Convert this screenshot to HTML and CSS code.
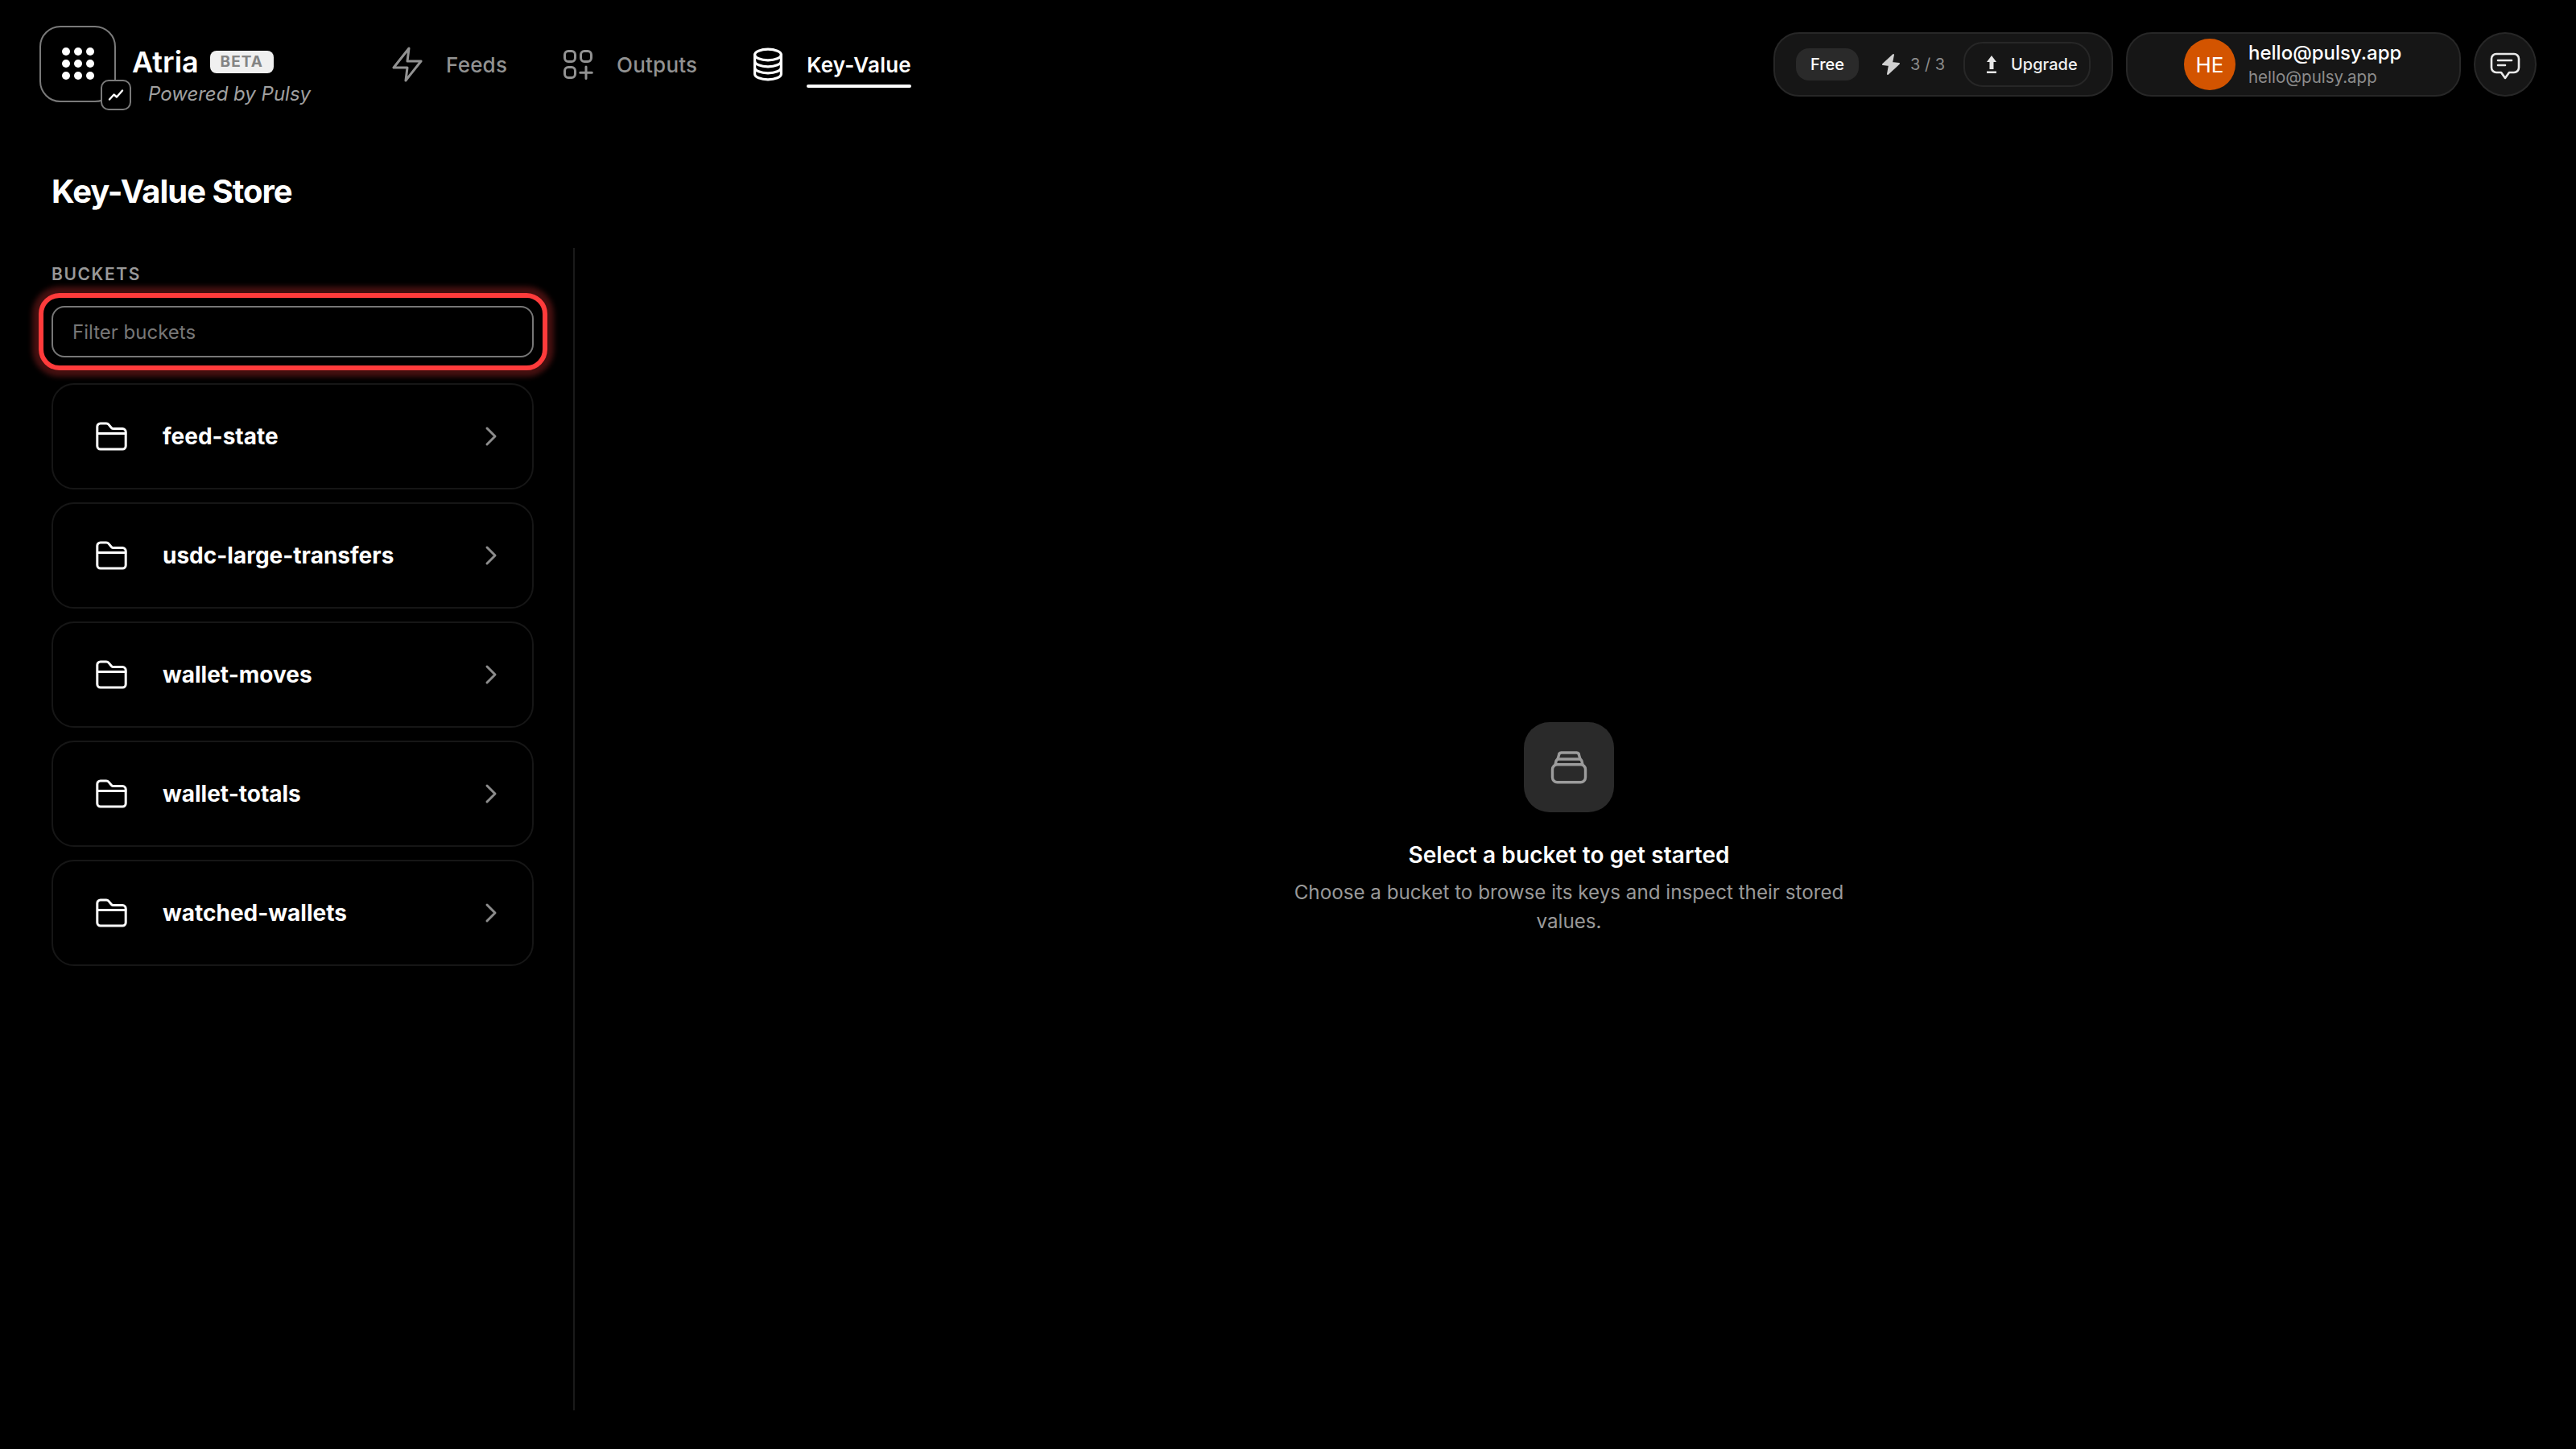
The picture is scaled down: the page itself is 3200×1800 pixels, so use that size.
FILE: index.html
```html
<!DOCTYPE html>
<html lang="en">
<head>
  <meta charset="UTF-8" />
  <title>Atria - Key-Value Store</title>
  <link rel="stylesheet" href="styles.css">
</head>
<body>

  <header class="topbar">
    <div class="brand">
      <div class="logo">
        <svg class="logo-dots" width="40" height="40" viewBox="0 0 40 40" fill="#fff">
          <circle cx="5" cy="5" r="5"/><circle cx="20" cy="5" r="5"/><circle cx="35" cy="5" r="5"/>
          <circle cx="5" cy="20" r="5"/><circle cx="20" cy="20" r="5"/><circle cx="35" cy="20" r="5"/>
          <circle cx="5" cy="35" r="5"/><circle cx="20" cy="35" r="5"/><circle cx="35" cy="35" r="5"/>
        </svg>
        <div class="logo-badge">
          <svg width="20" height="16" viewBox="0 0 20 16" fill="none" stroke="#fff" stroke-width="2.4" stroke-linecap="round" stroke-linejoin="round">
            <path d="M2 13.5 L7.5 7.5 L11 10.5 L18 2.5"/>
          </svg>
        </div>
      </div>
      <div class="brand-text">
        <div class="brand-row">
          <span class="brand-name">Atria</span>
          <span class="beta">BETA</span>
        </div>
        <div class="brand-sub">Powered by Pulsy</div>
      </div>
    </div>

    <nav class="nav">
      <a class="nav-item">
        <svg width="48" height="48" viewBox="0 0 24 24" fill="none" stroke="currentColor" stroke-width="1.5" stroke-linecap="round" stroke-linejoin="round">
          <polygon points="13 2 3.5 14 12 14 11 22 20.5 10 12 10 13 2"/>
        </svg>
        <span class="nav-label">Feeds</span>
      </a>
      <a class="nav-item">
        <svg width="48" height="48" viewBox="0 0 24 24" fill="none" stroke="currentColor" stroke-width="1.5" stroke-linecap="round">
          <rect x="3.75" y="3.75" width="6.5" height="6.5" rx="2.2"/>
          <rect x="13.75" y="3.75" width="6.5" height="6.5" rx="2.2"/>
          <rect x="3.75" y="13.75" width="6.5" height="6.5" rx="2.2"/>
          <path d="M17 13.5v7.25M13.4 17.1h7.25"/>
        </svg>
        <span class="nav-label">Outputs</span>
      </a>
      <a class="nav-item active">
        <svg width="48" height="48" viewBox="0 0 24 24" fill="none" stroke="currentColor" stroke-width="1.6" stroke-linecap="round">
          <ellipse cx="12" cy="6" rx="8.2" ry="3.4"/>
          <path d="M3.8 6v12c0 1.9 3.7 3.4 8.2 3.4s8.2-1.5 8.2-3.4V6"/>
          <path d="M3.8 10c0 1.9 3.7 3.4 8.2 3.4s8.2-1.5 8.2-3.4"/>
          <path d="M3.8 14c0 1.9 3.7 3.4 8.2 3.4s8.2-1.5 8.2-3.4"/>
        </svg>
        <span class="nav-label">Key-Value</span>
      </a>
    </nav>

    <div class="topbar-right">
      <div class="pill plan">
        <span class="plan-name">Free</span>
        <span class="usage">
          <svg width="24" height="28" viewBox="0 0 24 28" fill="#d0d0d0" stroke="#d0d0d0" stroke-width="2" stroke-linejoin="round"><polygon points="15 2 2 14 10 15 8 26 22 13 13 12"/></svg>
          <span>3 / 3</span>
        </span>
        <a class="upgrade">
          <svg width="14" height="22" viewBox="0 0 14 22" fill="#e8e8e8">
            <path d="M7 0 L13 8 H9.5 V17 H4.5 V8 H1 Z"/><rect x="1" y="19.5" width="12" height="2.5"/>
          </svg>
          <span>Upgrade</span>
        </a>
      </div>

      <div class="pill user">
        <div class="avatar">HE</div>
        <div class="user-text">
          <div class="user-name">hello@pulsy.app</div>
          <div class="user-mail">hello@pulsy.app</div>
        </div>
      </div>

      <a class="pill chat">
        <svg width="40" height="40" viewBox="0 0 40 40" fill="none" stroke="#e8e8e8" stroke-width="2.6" stroke-linecap="round" stroke-linejoin="round">
          <path d="M9 7h22a6 6 0 0 1 6 6v11a6 6 0 0 1-6 6h-6l-5 7-5-7H9a6 6 0 0 1-6-6V13a6 6 0 0 1 6-6z"/>
          <path d="M11 15h17M11 21h9"/>
        </svg>
      </a>
    </div>
  </header>

  <h1 class="page-title">Key-Value Store</h1>

  <main class="layout">
    <aside class="sidebar">
      <div class="section-label">BUCKETS</div>
      <div class="filter">
        <input type="text" placeholder="Filter buckets" />
      </div>
      <div class="bucket-list" id="buckets"></div>
    </aside>

    <section class="empty">
      <div class="empty-icon">
        <svg width="48" height="44" viewBox="0 0 48 44" fill="none" stroke="#9c9c9c" stroke-width="3.4" stroke-linejoin="round" stroke-linecap="round">
          <rect x="3.5" y="18.7" width="41" height="22" rx="6"/>
          <path d="M7 18.7 L8 15 a3 3 0 0 1 3-3 h26 a3 3 0 0 1 3 3 l1 3.7"/>
          <path d="M10 12 L11.5 7 a3.5 3 0 0 1 3-3 h19 a3.5 3 0 0 1 3 3 L38 12"/>
        </svg>
      </div>
      <div class="empty-title">Select a bucket to get started</div>
      <p class="empty-text">Choose a bucket to browse its keys and inspect their stored values.</p>
    </section>
  </main>

  <script>
    const buckets = ["feed-state", "usdc-large-transfers", "wallet-moves", "wallet-totals", "watched-wallets"];
    const list = document.getElementById("buckets");

    // Une ligne par bucket
    buckets.forEach(function(name) {
      list.innerHTML += `
        <a class="bucket">
          <svg width="48" height="48" viewBox="0 0 24 24" fill="none" stroke="#fff" stroke-width="1.5" stroke-linejoin="round">
            <path d="M2.9 18V6a2 2 0 0 1 2-2h3.6a2 2 0 0 1 1.5.7l1.6 1.9a2 2 0 0 0 1.5.7h5.5a2 2 0 0 1 2 2V18a2 2 0 0 1-2 2H4.9a2 2 0 0 1-2-2z"/>
            <path d="M2.9 10.2h18.2"/>
          </svg>
          <span class="bucket-name">${name}</span>
          <svg class="chevron" width="40" height="40" viewBox="0 0 24 24" fill="none" stroke="#8c8c8c" stroke-width="1.8" stroke-linecap="round" stroke-linejoin="round">
            <polyline points="9 6 15 12 9 18"/>
          </svg>
        </a>
      `;
    });
  </script>

</body>
</html>
```

FILE: styles.css
```css
* {
  box-sizing: border-box;
}

body {
  font-family: 'Inter', sans-serif;
  background-color: #000;
  color: #fff;
  margin: 0;
  height: 1800px;
  overflow: hidden;
}

.topbar {
  display: flex;
  align-items: center;
  height: 160px;
  padding: 0 49px;
}

.brand {
  display: flex;
  align-items: flex-start;
  gap: 20px;
  margin-top: 2px;
}

.logo {
  position: relative;
  width: 95px;
  height: 95px;
  border: 2px solid #7a7a7a;
  border-radius: 26px;
  display: flex;
  align-items: center;
  justify-content: center;
}

.logo-badge {
  position: absolute;
  left: 74px;
  top: 65px;
  width: 38px;
  height: 38px;
  background: #000;
  border: 2px solid #7a7a7a;
  border-radius: 10px;
  display: flex;
  align-items: center;
  justify-content: center;
}

.brand-text {
  padding-top: 25px;
}

.brand-row {
  display: flex;
  align-items: center;
  gap: 14px;
  height: 40px;
}

.brand-name {
  font-size: 36px;
  font-weight: 600;
}

.beta {
  background: #f0f0f0;
  color: #848484;
  font-size: 19px;
  font-weight: 700;
  letter-spacing: 1px;
  height: 28px;
  width: 79px;
  border-radius: 8px;
  display: flex;
  align-items: center;
  justify-content: center;
}

.brand-sub {
  color: #a0a0a0;
  font-size: 24px;
  font-style: italic;
  padding-left: 20px;
  margin-top: 5px;
  white-space: nowrap;
}

.nav {
  display: flex;
  align-items: center;
  gap: 64px;
  margin-left: 96px;
}

.nav-item {
  display: flex;
  align-items: center;
  gap: 24px;
  color: #929292;
}

.nav-item.active {
  color: #fff;
}

.nav-label {
  position: relative;
  font-size: 26px;
  font-weight: 500;
  letter-spacing: 0.2px;
}

.nav-item.active .nav-label {
  font-weight: 600;
}

.nav-item.active .nav-label::after {
  content: "";
  position: absolute;
  left: 0;
  right: 0;
  bottom: -13px;
  height: 4px;
  border-radius: 2px;
  background: #fff;
}

.topbar-right {
  display: flex;
  align-items: center;
  gap: 16px;
  margin-left: auto;
}

.pill {
  display: flex;
  align-items: center;
  height: 80px;
  background: #161616;
  border: 2px solid #272727;
  border-radius: 32px;
}

.plan {
  width: 422px;
  padding: 0 26px;
}

.plan-name {
  background: #2a2a2a;
  border-radius: 16px;
  width: 78px;
  height: 40px;
  font-size: 20px;
  font-weight: 500;
  display: flex;
  align-items: center;
  justify-content: center;
}

.usage {
  display: flex;
  align-items: center;
  gap: 12px;
  margin-left: 28px;
  color: #8c8c8c;
  font-size: 20px;
}

.upgrade {
  display: flex;
  align-items: center;
  gap: 17px;
  height: 56px;
  width: 158px;
  margin-left: auto;
  padding-left: 26px;
  border: 2px solid #272727;
  border-radius: 24px;
  font-size: 20px;
  font-weight: 500;
  color: #f0f0f0;
}

.user {
  width: 416px;
  padding-left: 70px;
  gap: 16px;
}

.avatar {
  width: 64px;
  height: 64px;
  border-radius: 50%;
  background: #d35400;
  font-size: 26px;
  display: flex;
  align-items: center;
  justify-content: center;
}

.user-text {
  padding-top: 2px;
}

.user-name {
  font-size: 24px;
  font-weight: 500;
  line-height: 30px;
}

.user-mail {
  color: #8c8c8c;
  font-size: 20.5px;
  line-height: 30px;
}

.chat {
  width: 78px;
  justify-content: center;
  border-radius: 50%;
}

.page-title {
  margin: 54px 0 0 64px;
  font-size: 40px;
  font-weight: 700;
  line-height: 48px;
  letter-spacing: -1px;
}

.layout {
  display: flex;
  margin: 46px 0 0 64px;
}

.sidebar {
  width: 650px;
  height: 1444px;
  padding-right: 49px;
  border-right: 2px solid #1a1a1a;
}

.section-label {
  color: #999;
  font-size: 21px;
  font-weight: 600;
  letter-spacing: 1.6px;
  line-height: 26px;
  margin-top: 20px;
}

.filter {
  position: relative;
  margin-top: 26px;
}

.filter input {
  display: block;
  width: 100%;
  height: 64px;
  padding: 0 24px;
  background: #000;
  border: 2px solid #777;
  border-radius: 16px;
  color: #fff;
  font-family: 'Inter', sans-serif;
  font-size: 24px;
}

.filter input::placeholder {
  color: #777;
}

.filter::after {
  content: "";
  position: absolute;
  inset: -16px -17px -16px -16px;
  border: 6px solid #ff3b3b;
  border-radius: 26px;
  box-shadow: 0 0 6px 8px rgba(255, 59, 59, 0.27);
  pointer-events: none;
}

.bucket-list {
  display: flex;
  flex-direction: column;
  gap: 16px;
  margin-top: 32px;
}

.bucket {
  display: flex;
  align-items: center;
  gap: 39px;
  height: 132px;
  padding: 0 31px 0 49px;
  border: 2px solid #161616;
  border-radius: 28px;
}

.bucket-name {
  font-size: 28px;
  font-weight: 700;
}

.chevron {
  margin-left: auto;
}

.empty {
  flex: 1;
  display: flex;
  flex-direction: column;
  align-items: center;
  padding: 589px 0 0 0;
  margin-right: 16px;
}

.empty-icon {
  width: 112px;
  height: 112px;
  border-radius: 32px;
  background: #2a2a2a;
  display: flex;
  align-items: center;
  justify-content: center;
}

.empty-title {
  margin-top: 35px;
  font-size: 28px;
  font-weight: 600;
  line-height: 36px;
  letter-spacing: 0.1px;
}

.empty-text {
  width: 720px;
  margin: 11px 0 0;
  color: #999;
  font-size: 24.2px;
  line-height: 36px;
  text-align: center;
}
```
